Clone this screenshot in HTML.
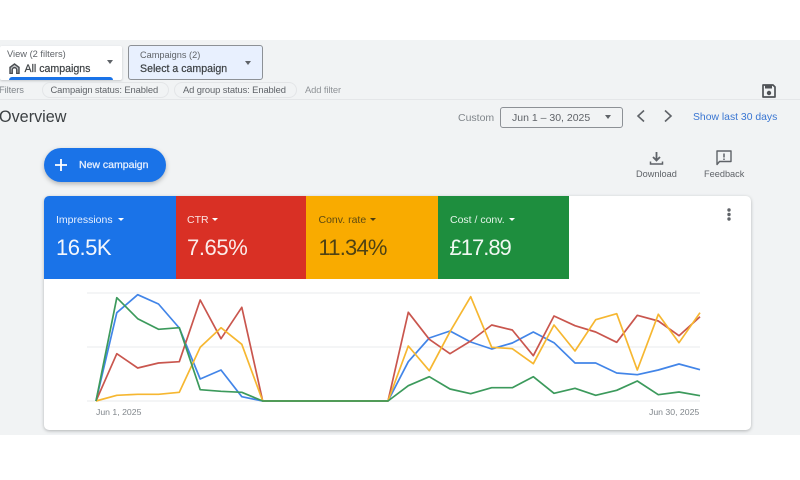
<!DOCTYPE html>
<html><head><meta charset="utf-8"><title>Overview</title>
<style>
html,body{margin:0;padding:0;background:#fff}
#p{position:relative;width:800px;height:480px;overflow:hidden;background:#fff;font-family:"Liberation Sans",sans-serif;filter:blur(.35px)}
#p div{position:absolute;white-space:nowrap}
#g{left:0;top:40px;width:800px;height:395px;background:#f1f3f4}
.t{line-height:14px}
.tri{width:0;height:0;border-left:4.5px solid transparent;border-right:4.5px solid transparent;border-top:4.5px solid #5f6368}
.s{border-left-width:3.5px;border-right-width:3.5px;border-top-width:3.8px;top:218.3px}
.lb{font-size:10.5px;line-height:14px;top:213px}
.v{font-size:22px;line-height:28px;top:234px}
.f{font-size:9.4px;letter-spacing:-.1px;top:82.5px}
</style></head><body><div id="p">
<div id="g"></div>

<div style="left:0;top:46px;width:122px;height:34px;background:#fff;border-radius:2px;box-shadow:0 1px 2px rgba(60,64,67,.25);overflow:hidden">
  <div style="left:9px;top:31px;width:104px;height:6px;background:#1a73e8;border-radius:3px 3px 0 0"></div>
</div>
<div class="t" style="left:7px;top:47px;font-size:9.3px;color:#5f6368">View (2 filters)</div>
<div class="t" style="left:24.5px;top:61.5px;font-size:10.6px;color:#3c4043;-webkit-text-stroke:.2px #3c4043">All campaigns</div>
<svg style="position:absolute;left:9px;top:62.5px" width="11" height="11" viewBox="0 0 13 13"><path d="M1.200 12.400V5.200L6.500 1.200l5.300 4v7.200H9.200V8.200a2.700 2.700 0 0 0-5.400 0v4.200z" fill="#c4c6c9" stroke="#4a4d51" stroke-width="1.700"/></svg>
<div class="tri" style="left:107px;top:60px;border-left-width:3.500px;border-right-width:3.500px;border-top-width:4px"></div>

<div style="left:128px;top:45px;width:133px;height:33px;background:#e8f0fe;border:1px solid #8d9196;border-radius:3px"></div>
<div class="t" style="left:140px;top:48px;font-size:9.200px;color:#5f6368">Campaigns (2)</div>
<div class="t" style="left:140px;top:61.500px;font-size:10.600px;color:#3c4043;-webkit-text-stroke:.2px #3c4043">Select a campaign</div>
<div class="tri" style="left:245px;top:60.500px;border-left-width:3.500px;border-right-width:3.500px;border-top-width:4px"></div>

<div class="t f" style="left:-1px;color:#80868b">Filters</div>
<div style="left:42px;top:82px;width:125px;height:14px;border:1px solid #e3e5e7;border-radius:8px"></div>
<div class="t f" style="left:50.500px;color:#5f6368">Campaign status: Enabled</div>
<div style="left:174px;top:82px;width:121px;height:14px;border:1px solid #e3e5e7;border-radius:8px"></div>
<div class="t f" style="left:183px;color:#5f6368">Ad group status: Enabled</div>
<div class="t f" style="left:305px;color:#8f9397">Add filter</div>
<div style="left:0;top:99px;width:800px;height:1px;background:#e4e6e8"></div>
<svg style="position:absolute;left:762px;top:84px" width="14" height="14" viewBox="0 0 14 14"><path d="M1 1h10l2 2v10H1z" fill="none" stroke="#4f5256" stroke-width="1.700" stroke-linejoin="round"/><rect x="3" y="1.500" width="7" height="3" fill="#4f5256"/><circle cx="7" cy="9" r="2.200" fill="#4f5256"/></svg>

<div style="left:-1px;top:106.500px;font-size:16.200px;line-height:20px;color:#3c4043">Overview</div>

<div class="t" style="left:458px;top:111px;font-size:10.500px;color:#80868b">Custom</div>
<div style="left:500px;top:107px;width:121px;height:19px;border:1px solid #8d9196;border-radius:3px"></div>
<div class="t" style="left:512px;top:111px;font-size:10.500px;color:#5f6368">Jun 1 – 30, 2025</div>
<div class="tri" style="left:605px;top:115px;border-left-width:3.500px;border-right-width:3.500px;border-top-width:4px"></div>
<svg style="position:absolute;left:634px;top:108px" width="42" height="16" viewBox="0 0 42 16"><path d="M10 2.500 4 8l6 5.500M31 2.500 37 8l-6 5.500" fill="none" stroke="#5f6368" stroke-width="1.600"/></svg>
<div class="t" style="left:693px;top:110.500px;font-size:10.400px;color:#3a76d2">Show last 30 days</div>

<div style="left:44px;top:148px;width:122px;height:34px;background:#1a73e8;border-radius:17px;box-shadow:0 2px 5px rgba(60,64,67,.35)"></div>
<svg style="position:absolute;left:54px;top:158px" width="14" height="14" viewBox="0 0 14 14"><path d="M7 1v12M1 7h12" stroke="#fff" stroke-width="1.800"/></svg>
<div class="t" style="left:79px;top:158px;font-size:10.500px;color:#e8f0fe;-webkit-text-stroke:.25px #e8f0fe">New campaign</div>

<svg style="position:absolute;left:649px;top:151px" width="15" height="15" viewBox="0 0 15 15"><path d="M7.500 1v7.500M4 6l3.500 3.500L11 6" fill="none" stroke="#5f6368" stroke-width="1.800"/><path d="M1.500 10.500v2.500h12v-2.500" fill="none" stroke="#5f6368" stroke-width="1.500"/></svg>
<div class="t" style="left:636px;top:167px;font-size:9.200px;color:#5f6368">Download</div>
<svg style="position:absolute;left:716px;top:150px" width="16" height="16" viewBox="0 0 16 16"><path d="M1 1h14v10.500H3.500L1 14.500z" fill="none" stroke="#5f6368" stroke-width="1.400" stroke-linejoin="round"/><path d="M8 3.500v4M8 8.500v1.500" stroke="#5f6368" stroke-width="1.500"/></svg>
<div class="t" style="left:704px;top:167px;font-size:9.200px;color:#5f6368">Feedback</div>

<div style="left:44px;top:196px;width:707px;height:234px;background:#fff;border-radius:5px;box-shadow:0 1px 3px rgba(60,64,67,.35)"></div>
<div style="left:44px;top:196px;width:132px;height:83px;background:#1a73e8;border-radius:5px 0 0 0"></div>
<div style="left:176px;top:196px;width:130px;height:83px;background:#d93025"></div>
<div style="left:306px;top:196px;width:132px;height:83px;background:#f9ab00"></div>
<div style="left:438px;top:196px;width:130.500px;height:83px;background:#1e8e3e"></div>

<div class="lb" style="left:56px;color:#e8f0fe">Impressions</div>
<div class="tri s" style="left:117.500px;border-top-color:#fff"></div>
<div class="v" style="left:56px;color:#f4f7fd;letter-spacing:-.5px">16.5K</div>
<div class="lb" style="left:187px;color:#fbe4e2">CTR</div>
<div class="tri s" style="left:211.500px;border-top-color:#fff"></div>
<div class="v" style="left:187px;color:#fbecea;letter-spacing:-.4px">7.65%</div>
<div class="lb" style="left:318.500px;color:#5d4a12">Conv. rate</div>
<div class="tri s" style="left:370px;border-top-color:#4a3c10"></div>
<div class="v" style="left:318.500px;color:#4f4213;letter-spacing:-.8px">11.34%</div>
<div class="lb" style="left:450px;color:#e6f4ea">Cost / conv.</div>
<div class="tri s" style="left:509px;border-top-color:#fff"></div>
<div class="v" style="left:449.500px;color:#f0f8f2;letter-spacing:-1px">£17.89</div>

<svg style="position:absolute;left:726px;top:208px" width="6" height="14" viewBox="0 0 6 14"><circle cx="3" cy="2" r="1.700" fill="#5f6368"/><circle cx="3" cy="6.500" r="1.700" fill="#5f6368"/><circle cx="3" cy="11" r="1.700" fill="#5f6368"/></svg>

<svg style="position:absolute;left:0;top:0" width="800" height="480" viewBox="0 0 800 480">
<g stroke="#eeeff0" stroke-width="1.200"><path d="M87 293H700M87 347H700M87 401H700"/></g>
<g fill="none" stroke-width="1.700" stroke-linejoin="round">
<polyline stroke="#4285e8" points="96,401 116.800,312.700 137.700,294.700 158.500,304 179.300,328 200.200,379 221,370 241.800,396.700 262.700,401 388,401 408.300,361.700 429.300,338 450,331 470.700,342 491.700,349 512.300,343 533.300,332 554,342.700 575,363 595.700,363 616.700,373 637.300,374.700 658.300,370 679,364 700,369.700"/>
<polyline stroke="#c9564e" points="96,401 116.800,353.700 137.700,368 158.500,363 179.300,361.700 200.200,300 221,338.700 241.800,307.300 262.700,401 388,401 408.300,312.300 429.300,339.300 450,353.700 470.700,341 491.700,325 512.300,330 533.300,355.700 554,316 575,325.700 595.700,332 616.700,342.300 637.300,315.300 658.300,321 679,335.700 700,316.700"/>
<polyline stroke="#f6b731" points="96,401 116.800,395.300 137.700,394.300 158.500,394.300 179.300,392.300 200.200,347.300 221,327.700 241.800,344.300 262.700,401 388,401 408.300,346 429.300,370.700 450,331.700 470.700,296.700 491.700,347.300 512.300,348.700 533.300,363.700 554,325 575,351 595.700,319.700 616.700,313.700 637.300,370 658.300,314.300 679,342.700 700,312.700"/>
<polyline stroke="#3c9a5c" points="96,401 116.800,297.700 137.700,318.700 158.500,329.300 179.300,327.700 200.200,389.700 221,391.300 241.800,392.300 262.700,401 388,401 408.300,385.700 429.300,376.700 450,389 470.700,393.700 491.700,387.700 512.300,387.700 533.300,376.700 554,393.300 575,388.300 595.700,395.300 616.700,390.300 637.300,381 658.300,394.700 679,392 700,395.700"/>
</g></svg>
<div class="t" style="left:96px;top:405px;font-size:8.700px;color:#80868b">Jun 1, 2025</div>
<div class="t" style="left:649px;top:405px;font-size:8.700px;color:#80868b">Jun 30, 2025</div>
</div></body></html>
